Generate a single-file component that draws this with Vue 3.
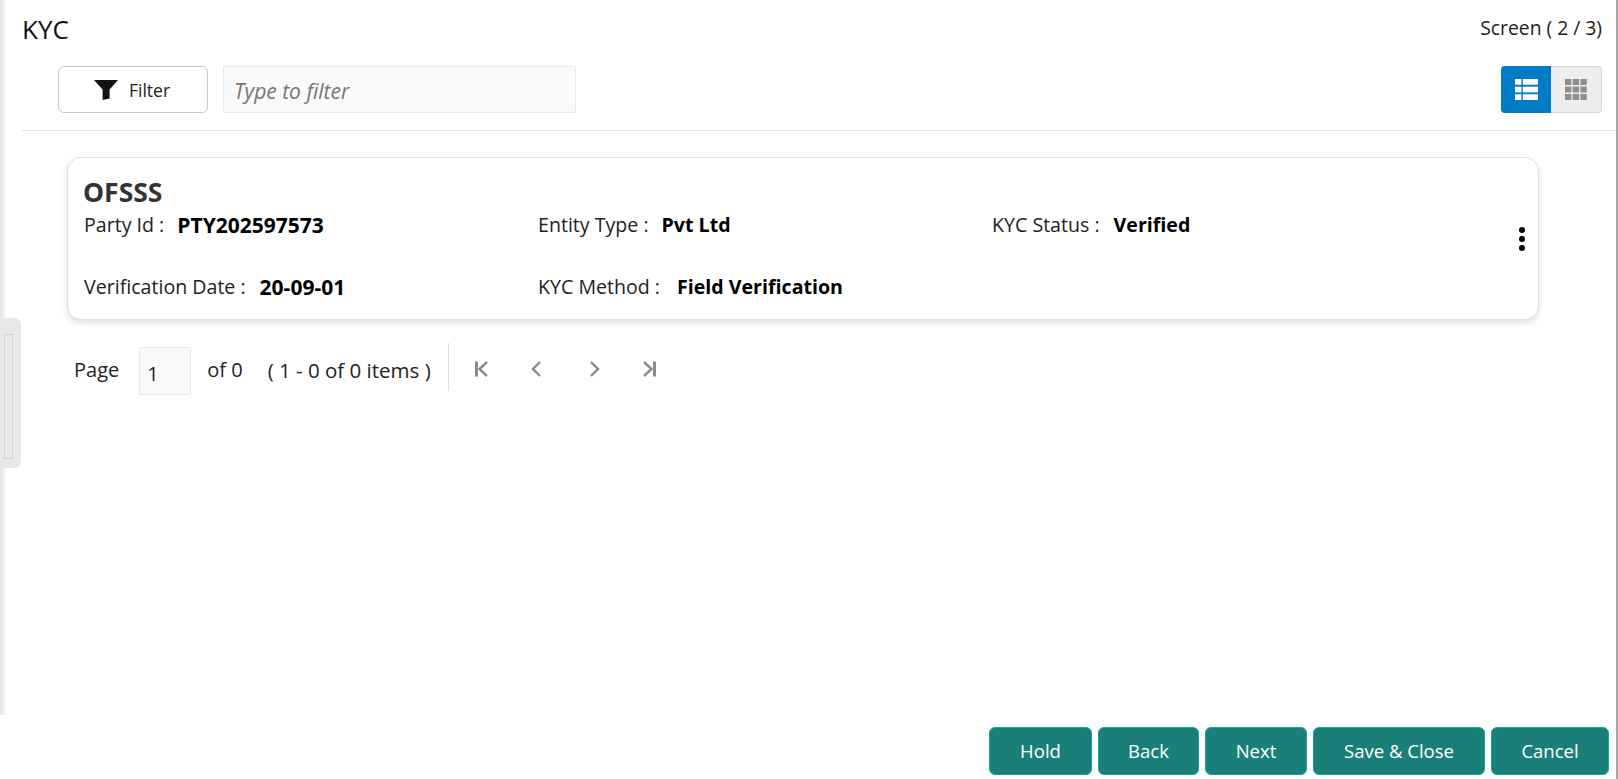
<template>
  <div class="screen">
    <div class="edge-handle"><div class="handle-inner"></div></div>

    <div class="main">
      <div class="title-row">
        <h1 class="page-title">KYC</h1>
        <span class="screen-count">Screen ( 2 / 3)</span>
      </div>

      <div class="toolbar">
        <button class="filter-btn">
          <svg class="filter-icon" viewBox="0 0 24 20">
            <path d="M0 0H24L15.6 9.6V18.4L8.6 20V9.6Z" fill="#111" />
          </svg>
          <span>Filter</span>
        </button>
        <div class="filter-input">Type to filter</div>
        <div class="view-toggle">
          <button class="toggle-btn active">
            <svg viewBox="0 0 23 21" width="23" height="21">
              <g fill="#fff">
                <template v-for="row in [0, 7.7, 15.3]" :key="row">
                  <rect x="0" :y="row" width="6.4" height="5.7" />
                  <rect x="7.8" :y="row" width="15.2" height="5.7" />
                </template>
              </g>
            </svg>
          </button>
          <button class="toggle-btn">
            <svg viewBox="0 0 22 21" width="22" height="21">
              <g fill="#8f8f8f">
                <template v-for="row in [0, 7.5, 15]" :key="row">
                  <rect v-for="col in [0, 7.7, 15.4]" :key="col" :x="col" :y="row" width="6.4" height="6" />
                </template>
              </g>
            </svg>
          </button>
        </div>
      </div>

      <div class="content">
        <div class="card">
          <div class="card-body">
            <div class="card-title">OFSSS</div>
            <div class="fields">
              <div v-for="f in fields" :key="f.label" class="field" :style="{ gap: f.gap + 'px' }">
                <span class="field-label">{{ f.label }} :</span>
                <span class="field-value" :class="{ num: f.num }">{{ f.value }}</span>
              </div>
            </div>
          </div>
          <div class="kebab">
            <i></i><i></i><i></i>
          </div>
        </div>

        <div class="pager">
          <span>Page</span>
          <div class="pager-input">1</div>
          <span>of 0</span>
          <span class="pager-items">( 1 - 0 of 0 items )</span>
          <div class="pager-nav">
            <svg viewBox="0 0 13 16" width="13" height="16">
              <path class="bar" d="M1.5 0.5V15.5" />
              <path d="M12 1L4.5 8L12 15" />
            </svg>
            <svg viewBox="0 0 10 16" width="10" height="16" class="nav-prev">
              <path d="M9 1L2 8L9 15" />
            </svg>
            <svg viewBox="0 0 10 16" width="10" height="16" class="nav-next">
              <path d="M1 1L8 8L1 15" />
            </svg>
            <svg viewBox="0 0 13 16" width="13" height="16" class="nav-last">
              <path class="bar" d="M11.5 0.5V15.5" />
              <path d="M1 1L8.5 8L1 15" />
            </svg>
          </div>
        </div>
      </div>
    </div>

    <div class="footer">
      <button v-for="b in actions" :key="b.label" class="action-btn" :style="{ width: b.width + 'px' }">
        {{ b.label }}
      </button>
    </div>
  </div>
</template>

<script setup>
const fields = [
  { label: 'Party Id', value: 'PTY202597573', num: true, gap: 13 },
  { label: 'Entity Type', value: 'Pvt Ltd', gap: 13 },
  { label: 'KYC Status', value: 'Verified', gap: 14 },
  { label: 'Verification Date', value: '20-09-01', num: true, gap: 14 },
  { label: 'KYC Method', value: 'Field Verification', gap: 17 }
]

const actions = [
  { label: 'Hold', width: 103 },
  { label: 'Back', width: 101 },
  { label: 'Next', width: 102 },
  { label: 'Save & Close', width: 172 },
  { label: 'Cancel', width: 118 }
]
</script>

<style>
html,
body {
  margin: 0;
  background: #fff;
  overflow: hidden;
}
</style>

<style scoped>
.screen {
  position: relative;
  width: 1618px;
  height: 779px;
  box-sizing: border-box;
  border-right: 2px solid #a8a8a8;
  display: flex;
  flex-direction: column;
  font-family: "Open Sans", "Noto Sans", sans-serif;
  color: #111;
  background: linear-gradient(90deg, #e2e2e2 0, #fff 7px) no-repeat 0 0 / 7px 715px, #fff;
}

.edge-handle {
  position: absolute;
  left: 0;
  top: 318px;
  width: 21px;
  height: 150px;
  box-sizing: border-box;
  padding: 16px 8px 11px 4px;
  background: #e8e8e6;
  border-radius: 0 6px 6px 0;
}

.handle-inner {
  height: 100%;
  border: 1px solid #d2d2d0;
}

.main {
  flex: 1;
  padding-left: 22px;
}

.title-row {
  height: 66px;
  box-sizing: border-box;
  display: flex;
  justify-content: space-between;
  padding: 10px 14px 0 0;
}

.page-title {
  margin: 0;
  font-size: 26px;
  font-weight: 400;
  line-height: 38px;
}

.screen-count {
  font-size: 19.3px;
  line-height: 36px;
  color: #222;
}

.toolbar {
  display: flex;
  align-items: stretch;
  height: 47px;
  padding: 0 14px 17px 36px;
  border-bottom: 1px solid #e3e3e3;
}

.filter-btn {
  width: 150px;
  display: flex;
  align-items: center;
  justify-content: center;
  gap: 11px;
  padding: 0 2px 0 0;
  background: #fff;
  border: 1px solid #c9c9c9;
  border-radius: 6px;
  font: inherit;
  font-size: 17.5px;
  color: #222;
}

.filter-icon {
  width: 24px;
  height: 20px;
}

.filter-input {
  width: 353px;
  margin-left: 15px;
  box-sizing: border-box;
  padding: 3px 10px 0;
  display: flex;
  align-items: center;
  background: #fafafa;
  border: 1px solid #e8e8e8;
  border-radius: 2px;
  font-size: 21px;
  font-style: italic;
  color: #767676;
}

.view-toggle {
  margin-left: auto;
  display: flex;
}

.toggle-btn {
  width: 51px;
  padding: 0;
  display: flex;
  align-items: center;
  justify-content: center;
  background: #eeeeee;
  border: 1px solid #dadada;
  border-left: 0;
  border-radius: 0 4px 4px 0;
}

.toggle-btn.active {
  width: 50px;
  background: #007cc7;
  border: 0;
  border-radius: 4px 0 0 4px;
}

.content {
  padding: 26px 0 0 45px;
}

.card {
  width: 1472px;
  height: 163px;
  box-sizing: border-box;
  display: flex;
  align-items: center;
  padding: 0 13px 0 16px;
  background: #fff;
  border: 1px solid #dde1e4;
  border-radius: 14px;
  box-shadow: 0 3px 6px rgba(0, 0, 0, 0.12);
}

.card-body {
  flex: 1;
  align-self: flex-start;
  padding-top: 17px;
}

.card-title {
  margin-left: -1px;
  font-size: 26.5px;
  font-weight: 700;
  line-height: 34px;
  color: #333;
}

.fields {
  display: grid;
  grid-template-columns: repeat(3, 454px);
  grid-auto-rows: 62px;
}

.field {
  display: flex;
  font-size: 19.6px;
  line-height: 32px;
}

.field-label {
  color: #222;
}

.field-value {
  font-weight: 700;
  color: #000;
}

.field-value.num {
  font-size: 21px;
}

.kebab {
  display: flex;
  flex-direction: column;
  gap: 3px;
}

.kebab i {
  display: block;
  width: 6px;
  height: 6px;
  border-radius: 50%;
  background: #000;
}

.pager {
  display: flex;
  align-items: flex-start;
  height: 48px;
  margin-top: 27px;
  padding-left: 7px;
  font-size: 20px;
  line-height: 46px;
  color: #222;
}

.pager-input {
  width: 52px;
  height: 48px;
  box-sizing: border-box;
  margin: 0 16px 0 20px;
  padding: 3px 0 0 7px;
  background: #fafafa;
  border: 1px solid #e8e8e8;
  border-radius: 2px;
}

.pager-items {
  margin-left: 25px;
  font-size: 20.5px;
}

.pager-nav {
  display: flex;
  align-items: center;
  height: 48px;
  box-sizing: border-box;
  margin: -4px 0 0 17px;
  padding: 3px 0 0 26px;
  border-left: 1px solid #dedede;
}

.pager-nav svg {
  fill: none;
  stroke: #8a8a8a;
  stroke-width: 2.4;
}

.pager-nav .bar {
  stroke-width: 3;
}

.nav-prev {
  margin-left: 43px;
}

.nav-next {
  margin-left: 49px;
}

.nav-last {
  margin-left: 43px;
}

.footer {
  display: flex;
  justify-content: flex-end;
  gap: 6px;
  padding: 0 7px 4px 0;
}

.action-btn {
  height: 48px;
  padding: 0 0 2px;
  background: #1b7f79;
  border: 1px solid #17a598;
  border-radius: 6px;
  font: inherit;
  font-size: 18.5px;
  color: #fff;
}
</style>
